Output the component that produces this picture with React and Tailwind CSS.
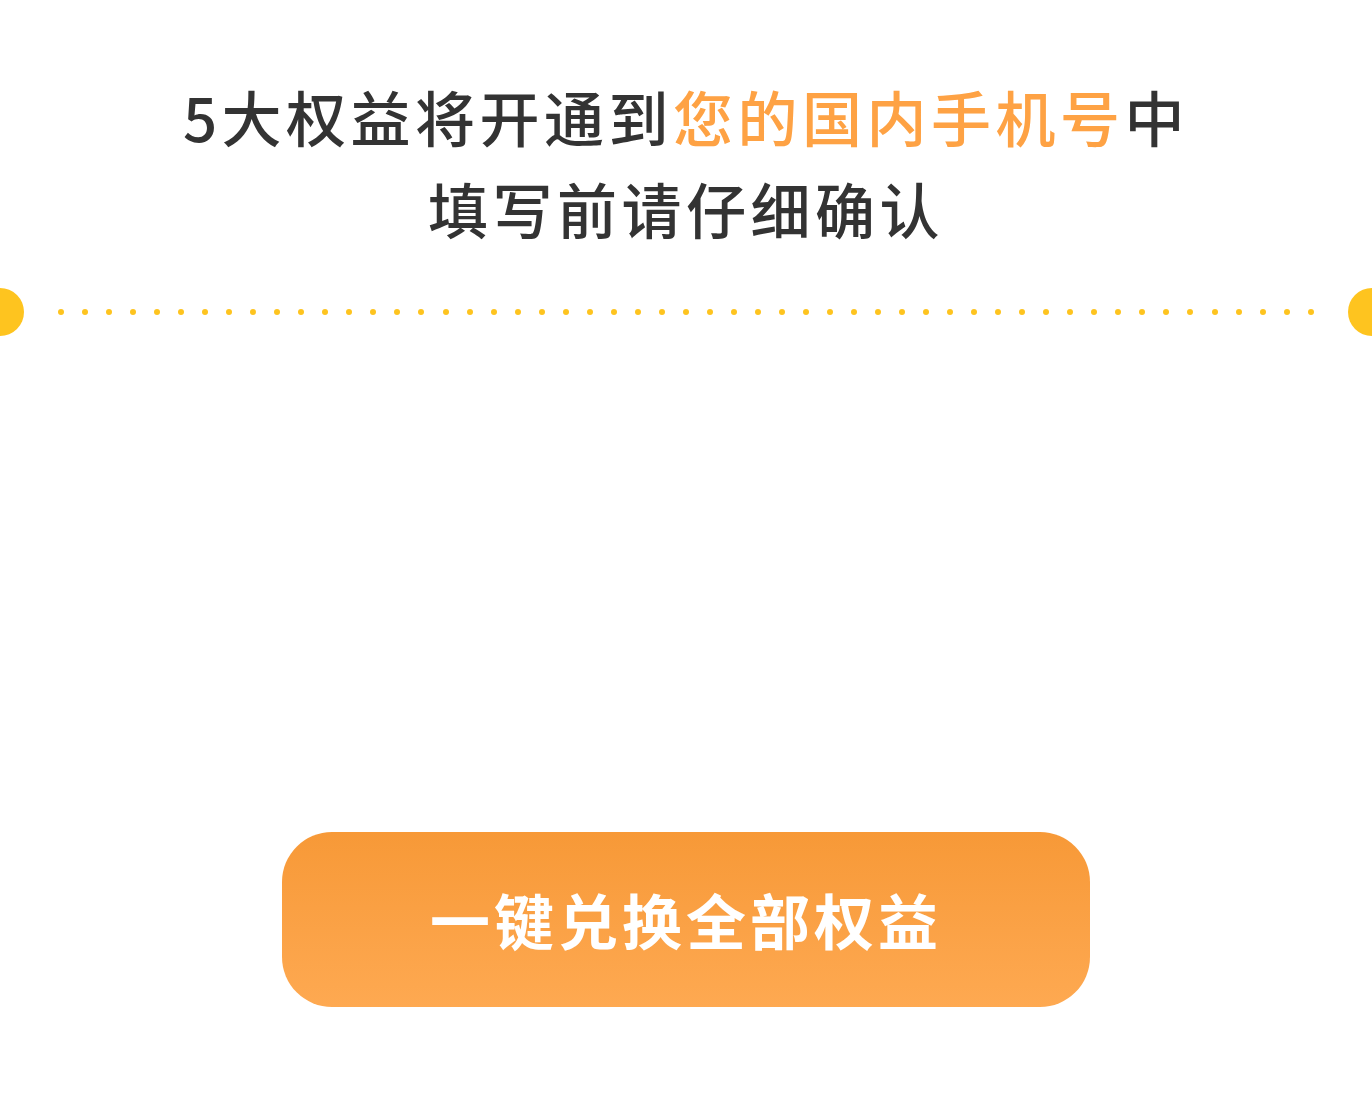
export default function App() {
  const dots = Array.from({ length: 53 })

  return (
    <div className="min-h-screen bg-white flex flex-col" style={{ fontFamily: '"Noto Sans CJK SC", "Noto Sans", sans-serif' }}>
      {/* Title */}
      <div className="pt-[70px] text-center text-[60px] leading-[92px] font-medium tracking-[4.5px] text-[#333333]">
        <p>5大权益将开通到<span className="text-[#fea244]">您的国内手机号</span>中</p>
        <p>填写前请仔细确认</p>
      </div>

      {/* Ticket divider */}
      <div className="mt-[34px] flex items-center h-12">
        <div className="w-6 h-12 rounded-r-full bg-[#fec41f]" />
        <div className="flex-1 flex justify-between items-center px-[34px]">
          {dots.map((_, i) => (
            <div key={i} className="w-[6px] h-[6px] rounded-full bg-[#fec41f]" />
          ))}
        </div>
        <div className="w-6 h-12 rounded-l-full bg-[#fec41f]" />
      </div>

      {/* Action */}
      <div className="mt-[496px] flex justify-center">
        <button className="w-[808px] h-[175px] rounded-[50px] bg-gradient-to-b from-[#f79937] to-[#fea951] text-white text-[60px] font-bold tracking-[4px] pb-[2px]">
          一键兑换全部权益
        </button>
      </div>
    </div>
  )
}
